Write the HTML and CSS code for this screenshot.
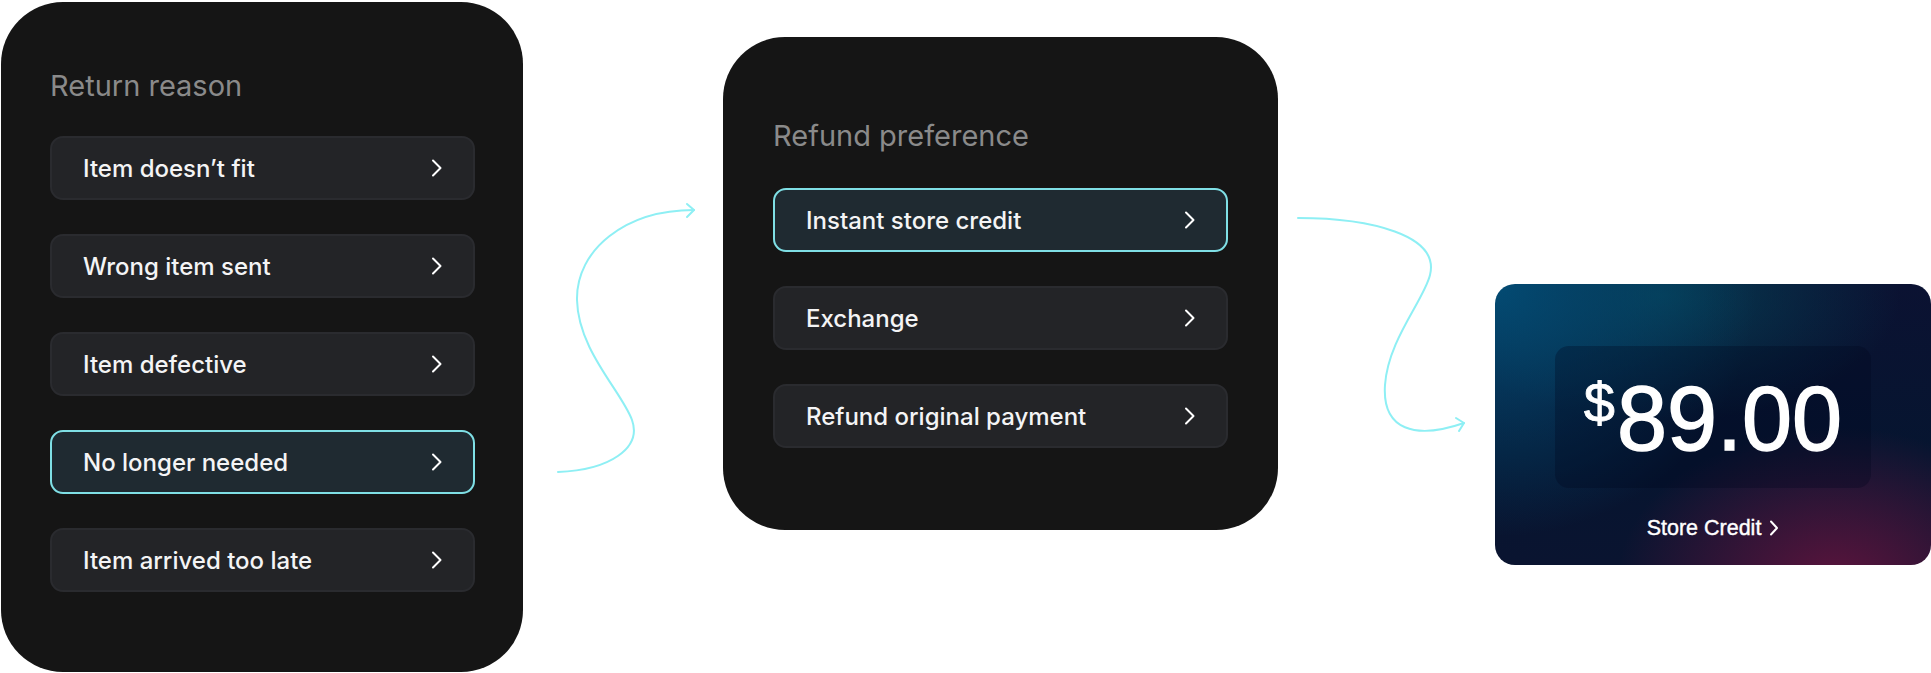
FILE: index.html
```html
<!DOCTYPE html>
<html lang="en">
  <head>
    <meta charset="UTF-8" />
    <meta name="viewport" content="width=device-width, initial-scale=1.0" />
    <title>Return flow</title>
    <link rel="stylesheet" href="styles.css">
  </head>
  <body>
    <div class="flow">
      <!-- Step 1: reason -->
      <section class="panel panel-reason">
        <h2 class="panel-title">Return reason</h2>
        <ul class="options">
          <li class="option">
            <span>Item doesn’t fit</span>
            <svg class="chev" viewBox="0 0 12 20"><path d="M2 2.5 L9.5 10 L2 17.5" /></svg>
          </li>
          <li class="option">
            <span>Wrong item sent</span>
            <svg class="chev" viewBox="0 0 12 20"><path d="M2 2.5 L9.5 10 L2 17.5" /></svg>
          </li>
          <li class="option">
            <span>Item defective</span>
            <svg class="chev" viewBox="0 0 12 20"><path d="M2 2.5 L9.5 10 L2 17.5" /></svg>
          </li>
          <li class="option selected">
            <span>No longer needed</span>
            <svg class="chev" viewBox="0 0 12 20"><path d="M2 2.5 L9.5 10 L2 17.5" /></svg>
          </li>
          <li class="option">
            <span>Item arrived too late</span>
            <svg class="chev" viewBox="0 0 12 20"><path d="M2 2.5 L9.5 10 L2 17.5" /></svg>
          </li>
        </ul>
      </section>

      <svg class="link link-one" viewBox="523 0 200 480">
        <path d="M558 472 C610 470 642 448 632 420 C622 392 578 350 577 300 C576 250 625 210 694 210" />
        <path d="M687 204 L694 210 L687 217" />
      </svg>

      <!-- Step 2: refund preference -->
      <section class="panel panel-refund">
        <h2 class="panel-title">Refund preference</h2>
        <ul class="options">
          <li class="option selected">
            <span>Instant store credit</span>
            <svg class="chev" viewBox="0 0 12 20"><path d="M2 2.5 L9.5 10 L2 17.5" /></svg>
          </li>
          <li class="option">
            <span>Exchange</span>
            <svg class="chev" viewBox="0 0 12 20"><path d="M2 2.5 L9.5 10 L2 17.5" /></svg>
          </li>
          <li class="option">
            <span>Refund original payment</span>
            <svg class="chev" viewBox="0 0 12 20"><path d="M2 2.5 L9.5 10 L2 17.5" /></svg>
          </li>
        </ul>
      </section>

      <svg class="link link-two" viewBox="1278 0 217 440">
        <path d="M1298 218 C1370 218 1440 235 1430 275 C1424 300 1388 340 1385 385 C1382 430 1415 440 1464 423" />
        <path d="M1456 418 L1464 423 L1459 431" />
      </svg>

      <!-- Result -->
      <div class="credit">
        <div class="credit-box">
          <span class="credit-currency">$</span><span class="credit-value">89.00</span>
        </div>
        <div class="credit-label">
          Store Credit
          <svg class="credit-chev" viewBox="0 0 10 16"><path d="M2 1.5 L8 8 L2 14.5" /></svg>
        </div>
      </div>
    </div>
  </body>
</html>
```

FILE: styles.css
```css
body {
  margin: 0;
  background: #ffffff;
  font-family: Inter, "Noto Sans", sans-serif;
  overflow: hidden;
}
.flow {
  display: flex;
  align-items: flex-start;
  width: 1931px;
}
.panel {
  box-sizing: border-box;
  background-color: #151515;
  border-radius: 62px;
}
.panel-reason {
  width: 522px;
  height: 670px;
  margin-left: 1px;
  margin-top: 2px;
  padding: 66px 48px 0 49px;
}
.panel-refund {
  width: 555px;
  height: 493px;
  margin-top: 37px;
  padding: 81px 50px 0 50px;
}
.panel-title {
  margin: 0 0 32px;
  font-size: 29px;
  line-height: 36px;
  font-weight: 400;
  color: #8a8a8a;
}
.panel-refund .panel-title {
  margin-bottom: 34px;
}
.options {
  list-style: none;
  margin: 0;
  padding: 0;
  display: flex;
  flex-direction: column;
  gap: 34px;
}
.option {
  box-sizing: border-box;
  height: 64px;
  display: flex;
  align-items: center;
  justify-content: space-between;
  padding: 0 30px 0 31px;
  background: #232427;
  border: 2px solid #2a2b2f;
  border-radius: 13px;
  color: #f4f4f5;
  font-size: 24px;
  font-weight: 500;
}
.option.selected {
  background: #1f2a31;
  border-color: #7fdfe5;
}
.chev {
  width: 12px;
  height: 20px;
  fill: none;
  stroke: #ffffff;
  stroke-width: 2;
  stroke-linecap: round;
  stroke-linejoin: round;
}
.link {
  flex: none;
  fill: none;
  stroke: #8eeff4;
  stroke-width: 2;
  stroke-linecap: round;
  stroke-linejoin: round;
}
.link-one {
  width: 200px;
  height: 480px;
}
.link-two {
  width: 217px;
  height: 440px;
}
.credit {
  box-sizing: border-box;
  width: 436px;
  height: 281px;
  margin-top: 284px;
  padding-top: 62px;
  border-radius: 20px;
  display: flex;
  flex-direction: column;
  align-items: center;
  color: #ffffff;
  font-family: "Liberation Sans", Arial, sans-serif;
  background:
    radial-gradient(ellipse 50% 55% at 78% 106%, rgba(100, 20, 62, 0.9), rgba(100, 20, 62, 0) 100%),
    radial-gradient(ellipse 60% 90% at 0% 0%, #034b73, rgba(3, 75, 115, 0) 100%),
    radial-gradient(ellipse 55% 45% at 38% 4%, rgba(4, 72, 92, 0.75), rgba(4, 72, 92, 0) 100%),
    linear-gradient(180deg, #0b1232 0%, #061530 60%, #0a1430 100%);
}
.credit-box {
  box-sizing: border-box;
  width: 316px;
  height: 142px;
  padding-top: 28px;
  border-radius: 14px;
  background: rgba(0, 8, 30, 0.3);
  text-align: center;
  line-height: 90px;
  white-space: nowrap;
}
.credit-currency {
  font-size: 56px;
  line-height: 1;
  vertical-align: 28px;
  margin-right: 2px;
  -webkit-text-stroke: 0.8px #ffffff;
}
.credit-value {
  font-size: 90px;
  -webkit-text-stroke: 1.4px #ffffff;
}
.credit-label {
  margin-top: 27px;
  font-size: 21.5px;
  line-height: 26px;
  display: flex;
  align-items: center;
  gap: 8px;
  -webkit-text-stroke: 0.4px #ffffff;
}
.credit-chev {
  width: 10px;
  height: 16px;
  fill: none;
  stroke: #ffffff;
  stroke-width: 2;
  stroke-linecap: round;
  stroke-linejoin: round;
}
```
